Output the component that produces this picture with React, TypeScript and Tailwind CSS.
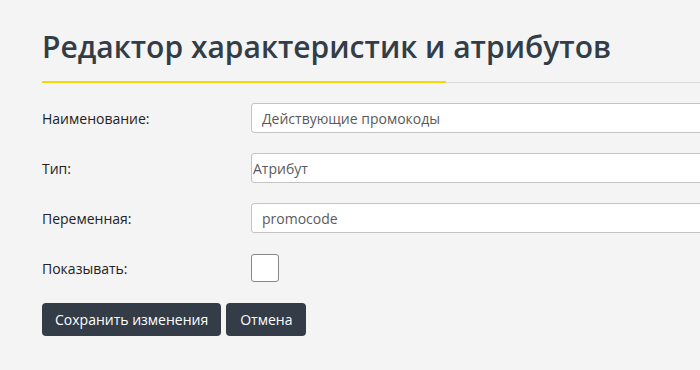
import React, { useState } from 'react';

const Row: React.FC<{ label: string; children: React.ReactNode }> = ({ label, children }) => (
  <div className="flex items-center h-[50px]">
    <label className="w-[209px] shrink-0 text-[14px] text-[#222]">{label}</label>
    {children}
  </div>
);

const App: React.FC = () => {
  const [name, setName] = useState('Действующие промокоды');
  const [variable, setVariable] = useState('promocode');
  const [show, setShow] = useState(false);

  return (
    <div
      className="min-h-screen bg-[#f4f4f4] overflow-hidden"
      style={{ fontFamily: '"Open Sans", "Liberation Sans", sans-serif' }}
    >
      <div className="pl-[42px] pt-[27px]">
        <div className="border-b border-[#dcdcdc]">
          <h1 className="text-[30px] leading-[40px] font-semibold text-[#333d47] pb-[14px] border-b-2 border-[#fcd600] -mb-px w-[404px]">
            <span className="whitespace-nowrap">Редактор характеристик и атрибутов</span>
          </h1>
        </div>

        <form className="pt-[10px]" onSubmit={(e) => e.preventDefault()}>
          <Row label="Наименование:">
            <input
              type="text"
              value={name}
              onChange={(e) => setName(e.target.value)}
              className="w-[500px] shrink-0 h-[30px] px-[10px] bg-white border border-[#c4c4c4] rounded-[3px] text-[14px] text-[#5a5a5a] outline-none"
            />
          </Row>
          <Row label="Тип:">
            <select className="w-[500px] shrink-0 h-[30px] px-[1px] bg-white border border-[#c4c4c4] rounded-[3px] text-[14px] text-[#5a5a5a] outline-none appearance-none">
              <option>Атрибут</option>
              <option>Характеристика</option>
            </select>
          </Row>
          <Row label="Переменная:">
            <input
              type="text"
              value={variable}
              onChange={(e) => setVariable(e.target.value)}
              className="w-[500px] shrink-0 h-[30px] px-[10px] bg-white border border-[#c4c4c4] rounded-[3px] text-[14px] text-[#5a5a5a] outline-none"
            />
          </Row>
          <Row label="Показывать:">
            <button
              type="button"
              onClick={() => setShow(!show)}
              className="w-[28px] h-[28px] -mt-[1px] bg-white border border-[#888] rounded-[3px] flex items-center justify-center text-[#333d47] text-[16px]"
            >
              {show ? '✓' : ''}
            </button>
          </Row>

          <div className="flex gap-[5px] mt-[10px]">
            <button
              type="submit"
              className="h-[33px] px-[13px] bg-[#333c47] text-white text-[14px] rounded-[4px]"
            >
              Сохранить изменения
            </button>
            <button
              type="button"
              className="h-[33px] px-[14px] bg-[#333c47] text-white text-[14px] rounded-[4px]"
            >
              Отмена
            </button>
          </div>
        </form>
      </div>
    </div>
  );
};

export default App;
